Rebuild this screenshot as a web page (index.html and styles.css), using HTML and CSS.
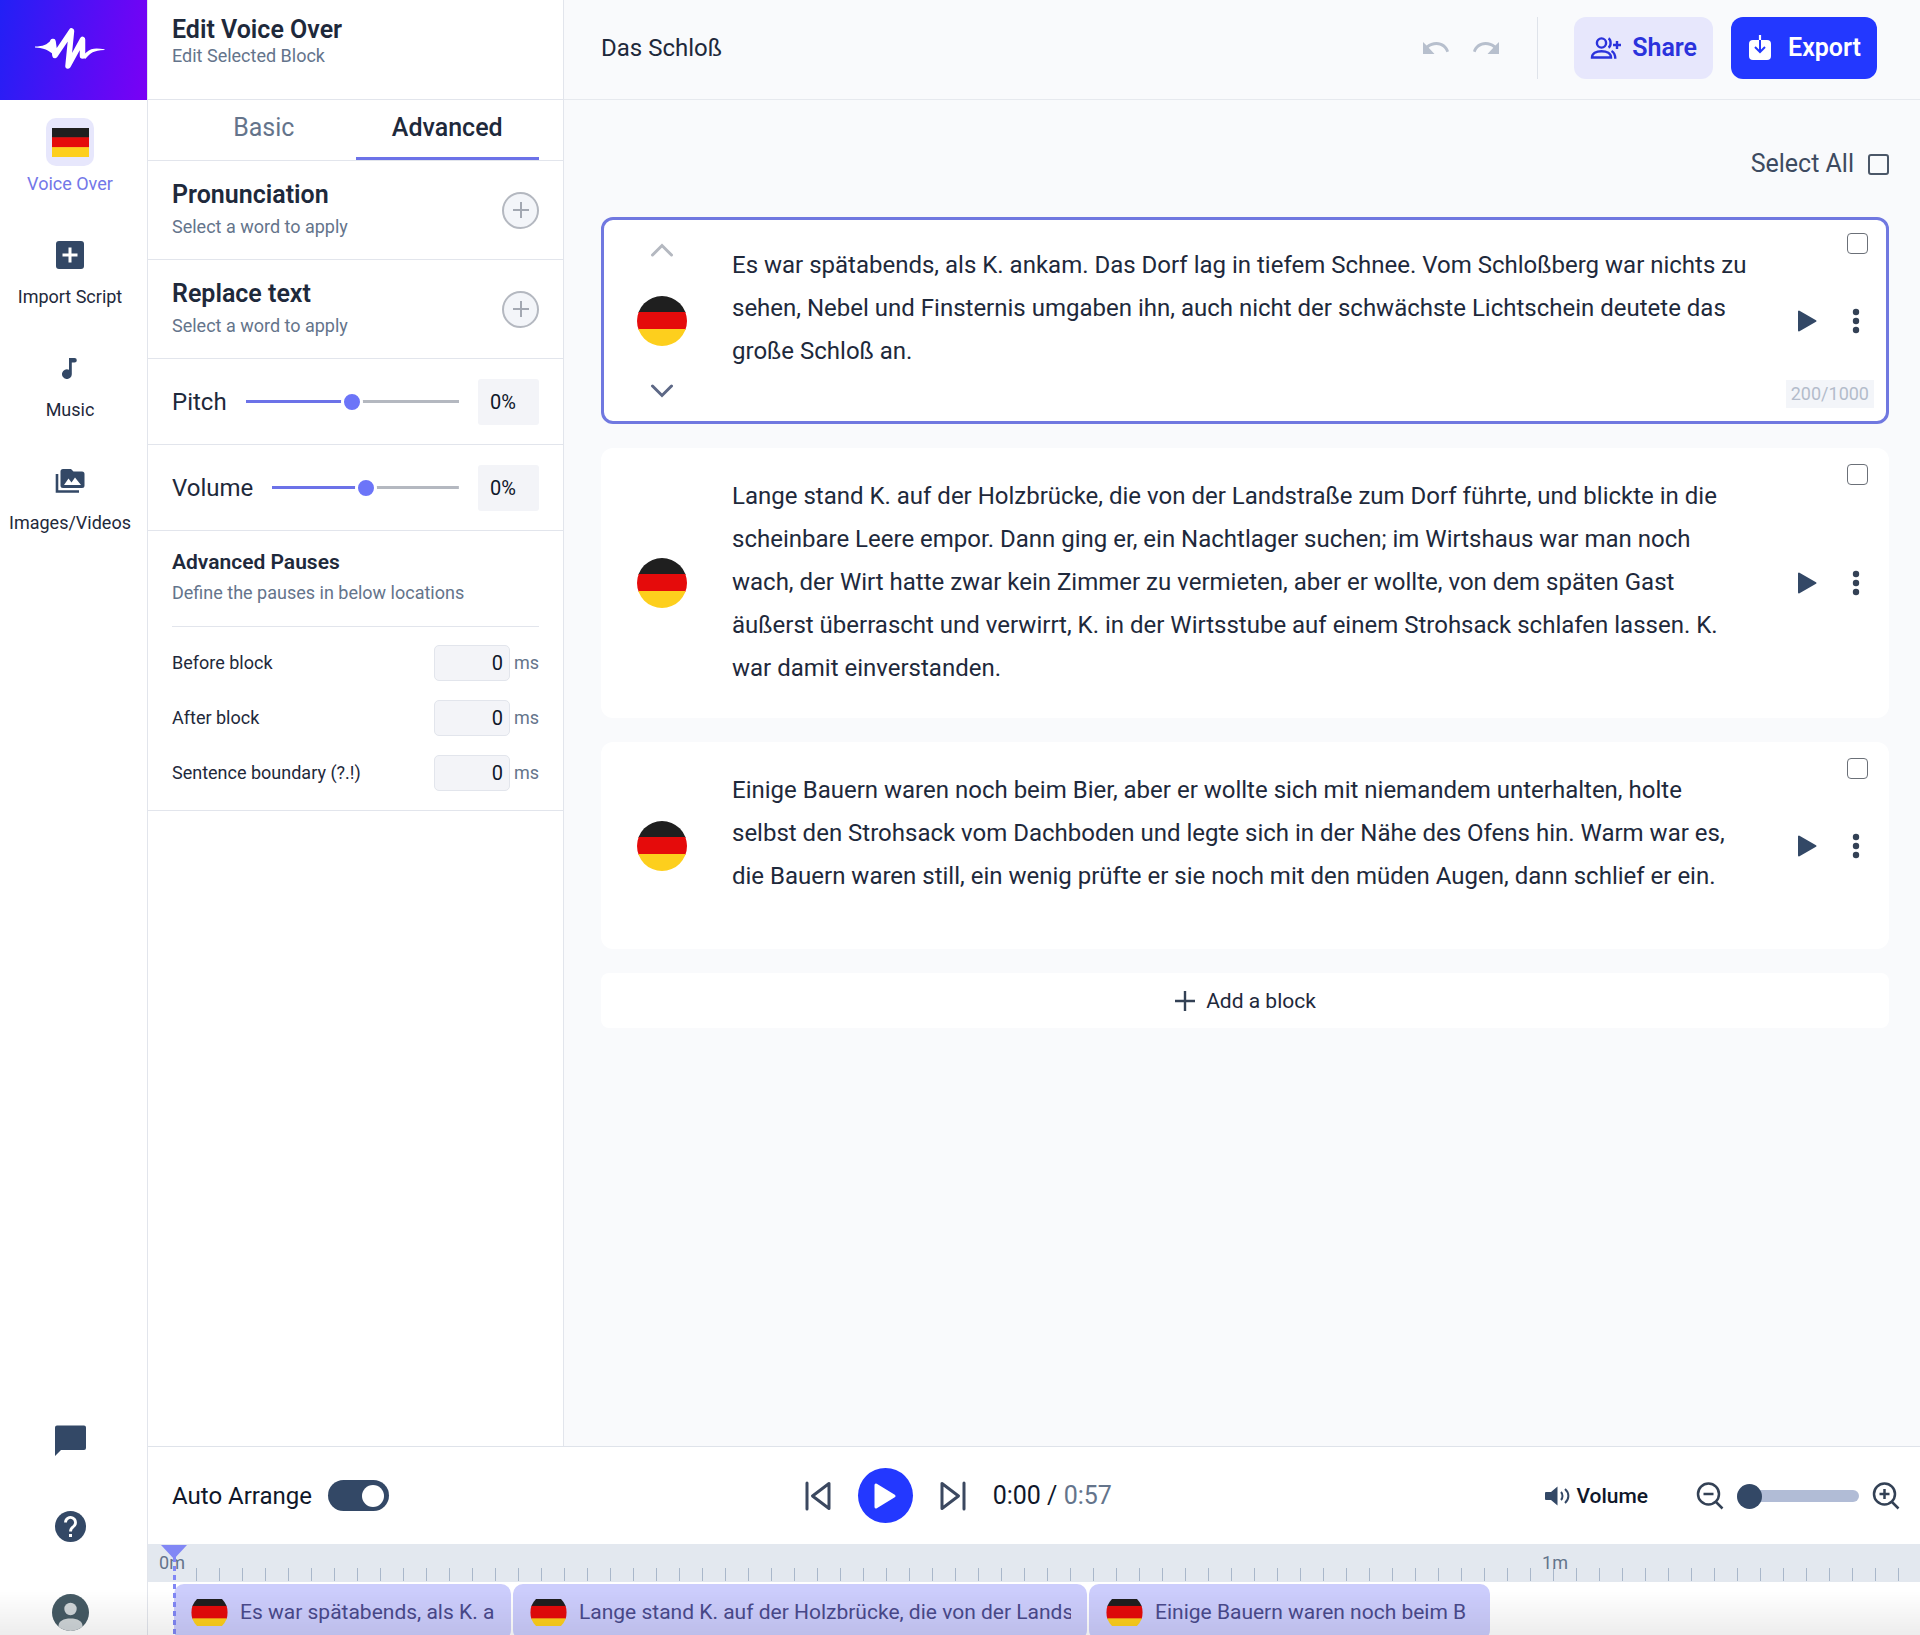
FILE: index.html
```html
<!DOCTYPE html>
<html lang="en">
<head>
    <meta charset="UTF-8">
    <meta name="viewport" content="width=device-width, initial-scale=1">
    <title>Das Schloß</title>
    <link rel="stylesheet" href="styles.css">
</head>
<body>

    <svg class="defs" aria-hidden="true">
        <defs>
            <clipPath id="flag-round"><circle cx="25" cy="25" r="25"/></clipPath>
            <symbol id="flag" viewBox="0 0 50 50" preserveAspectRatio="none">
                <rect width="50" height="17" fill="#1f1f1f"/>
                <rect y="16" width="50" height="18" fill="#e50b0b"/>
                <rect y="33" width="50" height="17" fill="#fdcf1d"/>
            </symbol>
            <symbol id="play" viewBox="0 0 20 22">
                <path d="M2 1.5v19L18.500 11z" fill="#334866" stroke="#334866" stroke-width="2" stroke-linejoin="round"/>
            </symbol>
            <symbol id="dots" viewBox="0 0 8 26">
                <circle cx="4" cy="4" r="3.200"/><circle cx="4" cy="13" r="3.200"/><circle cx="4" cy="22" r="3.200"/>
            </symbol>
        </defs>
    </svg>

    <div class="app">

        <aside class="sidebar">
            <a class="logo" href="#" aria-label="Home">
                <svg viewBox="0 0 147 100">
                    <path d="M35 46.600C43 46.200 47 45 51 40l6 16c-5-1-7-8-22-8.600zM104.500 49.200c-8-1-13-1.500-18 3l-6 5 5 1.500c5-6 8-8 19-8.700z" fill="#fff"/>
                    <path d="M53 41.500L55 55.500 71.500 31 68 66 82.500 39.500 82.500 56" fill="none" stroke="#fff" stroke-width="5.500" stroke-linecap="round" stroke-linejoin="round"/>
                </svg>
            </a>
            <nav class="side-nav">
                <a class="side-item active" href="#">
                    <span class="side-icon"><svg width="37" height="29"><use href="#flag" width="37" height="29"/></svg></span>
                    Voice Over
                </a>
                <a class="side-item" href="#">
                    <span class="side-icon">
                        <svg width="28" height="28" viewBox="0 0 28 28"><rect width="28" height="28" rx="3" fill="#334866"/><path d="M14 6.500v15M6.500 14h15" stroke="#fff" stroke-width="3"/></svg>
                    </span>
                    Import Script
                </a>
                <a class="side-item" href="#">
                    <span class="side-icon">
                        <svg width="16" height="22" viewBox="0 0 16 22"><path d="M7 1h5.500a2.200 2.200 0 0 1 0 4.600H9.800V17a4.900 4.900 0 1 1-2.800-4.300z" fill="#334866"/></svg>
                    </span>
                    Music
                </a>
                <a class="side-item" href="#">
                    <span class="side-icon">
                        <svg width="30" height="26" viewBox="0 0 30 26"><path d="M2 6v17.500h22" fill="none" stroke="#334866" stroke-width="2.600"/><path d="M8 1h8l2.500 2.500H27a2.500 2.500 0 0 1 2.500 2.500v11.500A2.500 2.500 0 0 1 27 20H8a2.500 2.500 0 0 1-2.500-2.500v-14A2.500 2.500 0 0 1 8 1z" fill="#334866"/><path d="M9 17l4.500-6.500 3 4 3.500-5L26 17z" fill="#fff"/></svg>
                    </span>
                    Images/Videos
                </a>
            </nav>
            <div class="side-bottom">
                <button type="button" aria-label="Chat">
                    <svg width="31" height="31" viewBox="0 0 31 31"><path d="M2 .5h27a2 2 0 0 1 2 2v20.500a2 2 0 0 1-2 2H6l-6 6v-28.500a2 2 0 0 1 2-2z" fill="#334866"/></svg>
                </button>
                <button type="button" aria-label="Help">
                    <svg width="31" height="31" viewBox="0 0 31 31"><circle cx="15.500" cy="15.500" r="15.500" fill="#334866"/><path d="M10.500 11.500a5 5 0 1 1 8 4c-2 1.500-3 2.200-3 5" fill="none" stroke="#fff" stroke-width="2.800"/><rect x="14" y="23" width="3" height="3" fill="#fff"/></svg>
                </button>
                <button type="button" aria-label="Account">
                    <svg width="37" height="37" viewBox="0 0 37 37"><clipPath id="av"><circle cx="18.500" cy="18.500" r="18.500"/></clipPath><g clip-path="url(#av)"><rect width="37" height="37" fill="#455a64"/><circle cx="18.500" cy="15" r="6.200" fill="#cfd5d8"/><path d="M6.500 37v-5c0-5 5-7.500 12-7.500s12 2.500 12 7.500v5z" fill="#cfd5d8"/></g></svg>
                </button>
            </div>
        </aside>

        <div class="workspace">
            <div class="upper">

                <section class="panel">
                    <header class="panel-head">
                        <h1>Edit Voice Over</h1>
                        <p>Edit Selected Block</p>
                    </header>
                    <div class="tabs" role="tablist">
                        <button type="button" role="tab">Basic</button>
                        <button type="button" role="tab" class="active" aria-selected="true">Advanced</button>
                    </div>

                    <div class="option">
                        <div>
                            <h2>Pronunciation</h2>
                            <p>Select a word to apply</p>
                        </div>
                        <button type="button" class="round-add" aria-label="Add pronunciation">
                            <svg width="18" height="18" viewBox="0 0 18 18"><path d="M9 1v16M1 9h16"/></svg>
                        </button>
                    </div>
                    <div class="option">
                        <div>
                            <h2>Replace text</h2>
                            <p>Select a word to apply</p>
                        </div>
                        <button type="button" class="round-add" aria-label="Add replacement">
                            <svg width="18" height="18" viewBox="0 0 18 18"><path d="M9 1v16M1 9h16"/></svg>
                        </button>
                    </div>

                    <div class="slider-row">
                        <label for="pitch">Pitch</label>
                        <input type="range" id="pitch" min="-50" max="50" value="0">
                        <input type="text" class="percent" value="0%" aria-label="Pitch value">
                    </div>
                    <div class="slider-row">
                        <label for="volume">Volume</label>
                        <input type="range" id="volume" min="-50" max="50" value="0">
                        <input type="text" class="percent" value="0%" aria-label="Volume value">
                    </div>

                    <div class="pauses">
                        <div class="pauses-head">
                            <h3>Advanced Pauses</h3>
                            <p>Define the pauses in below locations</p>
                        </div>
                        <div class="pause-list">
                            <div class="pause">
                                <label for="before">Before block</label>
                                <input type="text" id="before" value="0"><span>ms</span>
                            </div>
                            <div class="pause">
                                <label for="after">After block</label>
                                <input type="text" id="after" value="0"><span>ms</span>
                            </div>
                            <div class="pause">
                                <label for="sentence">Sentence boundary (?.!)</label>
                                <input type="text" id="sentence" value="0"><span>ms</span>
                            </div>
                        </div>
                    </div>
                </section>

                <main class="editor">
                    <header class="topbar">
                        <div class="doc-name">Das Schloß</div>
                        <div class="history">
                            <button type="button" aria-label="Undo">
                                <svg width="26" height="12" viewBox="0 0 26 12"><path d="M0 0l3.600 3.600C6.300 1.400 9.600 0 13.500 0 19.500 0 24.500 3.800 26 9.300l-2.600 1C22 6 18 3 13.500 3 10.500 3 7.800 4 5.700 5.700L11.500 12H0z"/></svg>
                            </button>
                            <button type="button" aria-label="Redo">
                                <svg width="26" height="12" viewBox="0 0 26 12"><path d="M26 0l-3.600 3.600C19.700 1.400 16.400 0 12.500 0 6.500 0 1.500 3.800 0 9.300l2.600 1C4 6 8 3 12.500 3c3 0 5.700 1 7.800 2.700L14.500 12H26z"/></svg>
                            </button>
                        </div>
                        <div class="top-actions">
                            <button type="button" class="btn share">
                                <svg width="32" height="24" viewBox="0 0 32 24" fill="none" stroke="#2b33dc" stroke-width="2.400"><circle cx="11.500" cy="7" r="4.600"/><path d="M2 21.500c0-4 4-6.300 9.500-6.300s9.500 2.300 9.500 6.300zM18.500 2.400c2.800 1.500 2.800 7.700 0 9.200M21.500 15c2.600 1.500 3.800 4 3.800 7.800M27 5v8M23 9h8"/></svg>
                                Share
                            </button>
                            <button type="button" class="btn export">
                                <svg width="22" height="26" viewBox="0 0 22 26"><rect y="5" width="22" height="20" rx="4" fill="#fff"/><path d="M11 0v6" stroke="#fff" stroke-width="2.200"/><path d="M11 5v11.500M6 12l5 5 5-5" fill="none" stroke="#2338ff" stroke-width="2"/></svg>
                                Export
                            </button>
                        </div>
                    </header>

                    <div class="blocks">
                        <div class="select-all">
                            <label for="all">Select All</label>
                            <input type="checkbox" id="all">
                        </div>

                        <article class="block selected">
                            <div class="voice">
                                <button type="button" class="move up" aria-label="Move up"><svg width="24" height="14" viewBox="0 0 24 14"><path d="M2.500 12L12 2.500 21.500 12"/></svg></button>
                                <svg class="flag" viewBox="0 0 50 50"><use href="#flag" width="50" height="50" clip-path="url(#flag-round)"/></svg>
                                <button type="button" class="move down" aria-label="Move down"><svg width="24" height="14" viewBox="0 0 24 14"><path d="M2.500 2L12 11.500 21.500 2"/></svg></button>
                            </div>
                            <p class="script" lang="de">Es war spätabends, als K. ankam. Das Dorf lag in tiefem Schnee. Vom Schloßberg war nichts zu sehen, Nebel und Finsternis umgaben ihn, auch nicht der schwächste Lichtschein deutete das große Schloß an.</p>
                            <div class="tools">
                                <input type="checkbox" aria-label="Select block 1">
                                <div class="tool-buttons">
                                    <button type="button" aria-label="Play"><svg width="20" height="22"><use href="#play"/></svg></button>
                                    <button type="button" aria-label="More"><svg width="8" height="26"><use href="#dots"/></svg></button>
                                </div>
                                <span class="counter">200/1000</span>
                            </div>
                        </article>

                        <article class="block">
                            <div class="voice">
                                <svg class="flag" viewBox="0 0 50 50"><use href="#flag" width="50" height="50" clip-path="url(#flag-round)"/></svg>
                            </div>
                            <p class="script" lang="de">Lange stand K. auf der Holzbrücke, die von der Landstraße zum Dorf führte, und blickte in die scheinbare Leere empor. Dann ging er, ein Nachtlager suchen; im Wirtshaus war man noch wach, der Wirt hatte zwar kein Zimmer zu vermieten, aber er wollte, von dem späten Gast äußerst überrascht und verwirrt, K. in der Wirtsstube auf einem Strohsack schlafen lassen. K. war damit einverstanden.</p>
                            <div class="tools">
                                <input type="checkbox" aria-label="Select block 2">
                                <div class="tool-buttons">
                                    <button type="button" aria-label="Play"><svg width="20" height="22"><use href="#play"/></svg></button>
                                    <button type="button" aria-label="More"><svg width="8" height="26"><use href="#dots"/></svg></button>
                                </div>
                            </div>
                        </article>

                        <article class="block">
                            <div class="voice">
                                <svg class="flag" viewBox="0 0 50 50"><use href="#flag" width="50" height="50" clip-path="url(#flag-round)"/></svg>
                            </div>
                            <p class="script" lang="de">Einige Bauern waren noch beim Bier, aber er wollte sich mit niemandem unterhalten, holte selbst den Strohsack vom Dachboden und legte sich in der Nähe des Ofens hin. Warm war es, die Bauern waren still, ein wenig prüfte er sie noch mit den müden Augen, dann schlief er ein.</p>
                            <div class="tools">
                                <input type="checkbox" aria-label="Select block 3">
                                <div class="tool-buttons">
                                    <button type="button" aria-label="Play"><svg width="20" height="22"><use href="#play"/></svg></button>
                                    <button type="button" aria-label="More"><svg width="8" height="26"><use href="#dots"/></svg></button>
                                </div>
                            </div>
                        </article>

                        <button type="button" class="add-block">
                            <svg width="22" height="22" viewBox="0 0 22 22"><path d="M11 1v20M1 11h20" stroke="#334155" stroke-width="2.400"/></svg>
                            Add a block
                        </button>
                    </div>
                </main>
            </div>

            <footer class="player">
                <div class="controls">
                    <div class="arrange">
                        <label for="arrange">Auto Arrange</label>
                        <input type="checkbox" id="arrange" class="switch" checked>
                    </div>
                    <div class="transport">
                        <button type="button" aria-label="Previous">
                            <svg width="26" height="30" viewBox="0 0 26 30"><path d="M2 2v26M24 2.500v25L7.500 15z"/></svg>
                        </button>
                        <button type="button" class="play-main" aria-label="Play all">
                            <svg width="24" height="28" viewBox="0 0 24 28"><path d="M3 3v22l18-11z"/></svg>
                        </button>
                        <button type="button" aria-label="Next">
                            <svg width="26" height="30" viewBox="0 0 26 30"><path d="M24 2v26M2 2.500v25L18.500 15z"/></svg>
                        </button>
                        <div class="time">0:00 / <span>0:57</span></div>
                    </div>
                    <div class="right-controls">
                        <button type="button" class="volume-btn">
                            <svg width="25" height="20" viewBox="0 0 25 20"><path d="M1 6h5l6.500-5.500v19L6 14H1a1 1 0 0 1-1-1V7a1 1 0 0 1 1-1z" fill="#334866"/><path d="M16 6c2 2 2 6 0 8M20 3c4.500 4 4.500 10 0 14" fill="none" stroke="#334866" stroke-width="2"/></svg>
                            Volume
                        </button>
                        <div class="zoom">
                            <button type="button" aria-label="Zoom out">
                                <svg width="28" height="28" viewBox="0 0 28 28"><circle cx="12.500" cy="12" r="10.500"/><path d="M20 20l6.500 6.500M7.500 12h10"/></svg>
                            </button>
                            <input type="range" min="0" max="100" value="0" aria-label="Timeline zoom">
                            <button type="button" aria-label="Zoom in">
                                <svg width="28" height="28" viewBox="0 0 28 28"><circle cx="12.500" cy="12" r="10.500"/><path d="M20 20l6.500 6.500M7.500 12h10M12.500 7v10"/></svg>
                            </button>
                        </div>
                    </div>
                </div>

                <div class="timeline">
                    <div class="ruler">
                        <span class="mark" style="left: 24px">0m</span>
                        <span class="mark" style="left: 1407px">1m</span>
                        <div class="ticks"></div>
                    </div>
                    <div class="track">
                        <div class="clip" style="width: 337px">
                            <svg width="37" height="27" viewBox="0 6.500 50 37"><use href="#flag" width="50" height="50" clip-path="url(#flag-round)"/></svg>
                            <span>Es war spätabends, als K. an</span>
                        </div>
                        <div class="clip" style="width: 574px">
                            <svg width="37" height="27" viewBox="0 6.500 50 37"><use href="#flag" width="50" height="50" clip-path="url(#flag-round)"/></svg>
                            <span>Lange stand K. auf der Holzbrücke, die von der Lands</span>
                        </div>
                        <div class="clip" style="width: 401px">
                            <svg width="37" height="27" viewBox="0 6.500 50 37"><use href="#flag" width="50" height="50" clip-path="url(#flag-round)"/></svg>
                            <span>Einige Bauern waren noch beim B</span>
                        </div>
                    </div>
                    <div class="playhead"></div>
                </div>
            </footer>
        </div>
    </div>

</body>
</html>
```
FILE: styles.css
```css
* {
    box-sizing: border-box;
}
body {
    margin: 0;
    font-family: Roboto, "Liberation Sans", sans-serif;
    font-size: 24px;
    line-height: 28px;
    color: #1e293b;
    background-color: #fff;
}
h1, h2, h3, p {
    margin: 0;
}
button {
    padding: 0;
    border: none;
    background: none;
    font: inherit;
    color: inherit;
    cursor: pointer;
}
svg {
    display: block;
    flex-shrink: 0;
}
.defs {
    position: absolute;
    width: 0;
    height: 0;
}
.app {
    display: flex;
    height: 100vh;
    overflow: hidden;
}
/* soft shade along the bottom edge of the window */
.app::after {
    content: "";
    position: fixed;
    left: 0;
    right: 0;
    bottom: 0;
    height: 44px;
    background: linear-gradient(rgba(0, 0, 0, 0), rgba(0, 0, 0, 0.07));
    pointer-events: none;
}

/* sidebar */
.sidebar {
    display: flex;
    flex-direction: column;
    width: 148px;
    flex-shrink: 0;
    border-right: 1px solid #e2e5ec;
}
.logo {
    height: 100px;
    background: linear-gradient(100deg, #2220f5, #7a00f5);
}
.side-nav {
    display: flex;
    flex-direction: column;
    gap: 35px;
    padding: 18px 7px 0 0;
}
.side-item {
    display: flex;
    flex-direction: column;
    align-items: center;
    gap: 6px;
    font-size: 18px;
    line-height: 24px;
    color: #1e293b;
    text-decoration: none;
}
.side-icon {
    display: flex;
    align-items: center;
    justify-content: center;
    width: 48px;
    height: 48px;
    border-radius: 10px;
}
.side-item.active {
    color: #7377e8;
}
.side-item.active .side-icon {
    background-color: #e7e7fc;
}
.side-bottom {
    display: flex;
    flex-direction: column;
    align-items: center;
    gap: 49px;
    margin-top: auto;
    padding: 0 7px 4px 0;
}
.side-bottom button {
    display: flex;
    align-items: center;
    justify-content: center;
    width: 37px;
    height: 37px;
}

.workspace {
    display: flex;
    flex-direction: column;
    flex: 1;
    min-width: 0;
}
.upper {
    display: flex;
    flex: 1;
    min-height: 0;
}

/* left settings panel */
.panel {
    width: 416px;
    flex-shrink: 0;
    border-right: 1px solid #e2e5ec;
}
.panel p {
    font-size: 18px;
    line-height: 24px;
    color: #64748b;
}
.panel-head {
    height: 100px;
    padding: 16px 24px;
    border-bottom: 1px solid #e2e5ec;
}
h1, h2 {
    font-size: 25px;
    font-weight: 600;
}
.tabs {
    display: flex;
    height: 61px;
    padding: 0 24px;
    border-bottom: 1px solid #e2e5ec;
}
.tabs button {
    flex: 1;
    padding-bottom: 2px;
    border-bottom: 3px solid transparent;
    font-size: 25px;
    color: #64748b;
}
.tabs .active {
    border-color: #6c72e8;
    color: #1e293b;
    font-weight: 500;
}
.option {
    display: flex;
    align-items: center;
    justify-content: space-between;
    padding: 20px 24px;
    border-bottom: 1px solid #e2e5ec;
}
.option p {
    margin-top: 6px;
}
.round-add {
    display: flex;
    align-items: center;
    justify-content: center;
    width: 37px;
    height: 37px;
    border: 2px solid #b4b8c0;
    border-radius: 50%;
    background-color: #f3f5f9;
}
.round-add path {
    stroke: #a3a8b2;
    stroke-width: 2;
}
.slider-row {
    display: flex;
    align-items: center;
    gap: 19px;
    height: 86px;
    padding: 0 24px;
    border-bottom: 1px solid #e2e5ec;
}
.slider-row input[type="range"] {
    flex: 1;
    min-width: 0;
    height: 22px;
    margin: 0;
    appearance: none;
    background: linear-gradient(90deg, #6c72e8 50%, #b4b8c0 50%) center / 100% 3px no-repeat;
}
.slider-row input[type="range"]::-webkit-slider-thumb {
    appearance: none;
    width: 22px;
    height: 22px;
    border: 3px solid #fff;
    border-radius: 50%;
    background-color: #6c75f8;
}
.percent {
    width: 61px;
    height: 46px;
    padding: 0 12px;
    border: none;
    border-radius: 3px;
    background-color: #f3f4f8;
    font: 20px Roboto, "Liberation Sans", sans-serif;
    color: #0f172a;
}
.pauses {
    padding: 17px 24px 19px;
    border-bottom: 1px solid #e2e5ec;
}
.pauses-head {
    padding-bottom: 21px;
    border-bottom: 1px solid #e2e5ec;
}
.pauses-head h3 {
    margin-bottom: 5px;
    font-size: 21px;
    font-weight: 600;
}
.pause-list {
    display: flex;
    flex-direction: column;
    gap: 19px;
    padding-top: 18px;
}
.pause {
    display: flex;
    align-items: center;
    font-size: 18px;
}
.pause label {
    flex: 1;
}
.pause input {
    width: 76px;
    height: 36px;
    padding: 0 6px;
    border: 1px solid #e2e5ec;
    border-radius: 5px;
    background-color: #f3f4f8;
    font: 20px Roboto, "Liberation Sans", sans-serif;
    text-align: right;
    color: #0f172a;
}
.pause span {
    margin-left: 4px;
    color: #64748b;
}

/* editor */
.editor {
    flex: 1;
    min-width: 0;
    background-color: #f9fafc;
}
.topbar {
    display: flex;
    align-items: center;
    height: 100px;
    padding: 0 43px 4px 37px;
    border-bottom: 1px solid #e6e9ee;
}
.doc-name {
    flex: 1;
}
.history {
    display: flex;
    gap: 24px;
    padding-right: 38px;
}
.history path {
    fill: #b7bfcd;
}
.top-actions {
    display: flex;
    align-items: center;
    gap: 18px;
    padding-left: 36px;
    border-left: 1px solid #dfe3ea;
}
.btn {
    display: flex;
    align-items: center;
    height: 62px;
    border-radius: 12px;
    font-size: 25px;
    font-weight: 600;
}
.share {
    gap: 10px;
    padding: 0 16px;
    background-color: #e7e7fc;
    color: #2b33dc;
}
.export {
    gap: 17px;
    padding: 0 16px 0 18px;
    background-color: #2338ff;
    color: #fff;
}
.blocks {
    display: flex;
    flex-direction: column;
    gap: 24px;
    padding: 46px 31px 0 37px;
}
.select-all {
    display: flex;
    align-items: center;
    justify-content: flex-end;
    gap: 14px;
    height: 36px;
    margin-bottom: 11px;
    font-size: 25px;
    color: #3d4a60;
}
.select-all input,
.tools input {
    appearance: none;
    width: 21px;
    height: 21px;
    margin: 0;
    border: 2px solid #4b5768;
    border-radius: 3px;
}
.block {
    display: grid;
    grid-template-columns: 116px 1fr 124px;
    column-gap: 12px;
    min-height: 207px;
    border: 3px solid transparent;
    border-radius: 12px;
    background-color: #fff;
}
.block.selected {
    border-color: #7078e0;
}
.voice {
    display: flex;
    flex-direction: column;
    align-items: center;
    justify-content: center;
    padding: 23px 0;
}
.selected .voice {
    justify-content: space-between;
}
.flag {
    width: 50px;
    height: 50px;
}
.move path {
    fill: none;
    stroke: #5d6886;
    stroke-width: 3;
    stroke-linecap: round;
}
.move.up path {
    stroke: #b4b8c0;
}
.script {
    padding: 24px 0 25px;
    line-height: 43px;
}
.tools {
    display: grid;
    grid-template-rows: 1fr auto 1fr;
    justify-items: end;
    padding: 13px 12px 13px 0;
}
.tools input {
    margin-right: 6px;
    border: 1px solid #6b7078;
    border-radius: 4px;
}
.tool-buttons {
    display: flex;
    gap: 13px;
}
.tool-buttons button {
    display: flex;
    align-items: center;
    justify-content: center;
    width: 36px;
    height: 36px;
}
.tool-buttons svg {
    fill: #334155;
}
.counter {
    align-self: end;
    padding: 0 5px;
    background-color: #f3f5f9;
    font-size: 18px;
    color: #b3bccb;
}
.add-block {
    display: flex;
    align-items: center;
    justify-content: center;
    gap: 10px;
    height: 55px;
    border-radius: 8px;
    background-color: #fff;
    font-size: 21px;
}

/* player and timeline */
.player {
    border-top: 1px solid #dfe3ea;
}
.controls {
    display: flex;
    align-items: center;
    justify-content: space-between;
    height: 97px;
    padding: 0 20px 0 24px;
    color: #0f172a;
}
.arrange {
    display: flex;
    align-items: center;
    gap: 16px;
}
.switch {
    display: flex;
    align-items: center;
    justify-content: flex-end;
    appearance: none;
    width: 61px;
    height: 31px;
    margin: 0;
    padding: 0 5px;
    border-radius: 16px;
    background-color: #334866;
}
.switch::before {
    content: "";
    width: 22px;
    height: 22px;
    border-radius: 50%;
    background-color: #fff;
}
.transport {
    display: flex;
    align-items: center;
    gap: 27px;
}
.transport path {
    fill: none;
    stroke: #3b4860;
    stroke-width: 3;
    stroke-linecap: round;
    stroke-linejoin: round;
}
.play-main {
    display: flex;
    align-items: center;
    justify-content: center;
    width: 55px;
    height: 55px;
    border-radius: 50%;
    background-color: #2338ff;
}
.transport .play-main path {
    fill: #fff;
    stroke: #fff;
}
.time {
    min-width: 137px;
    font-size: 25px;
}
.time span {
    color: #64748b;
}
.right-controls {
    display: flex;
    align-items: center;
    gap: 48px;
}
.volume-btn {
    display: flex;
    align-items: center;
    gap: 6px;
    font-size: 21px;
    font-weight: 500;
}
.zoom {
    display: flex;
    align-items: center;
    gap: 13px;
}
.zoom svg {
    fill: none;
    stroke: #334155;
    stroke-width: 2.5;
}
.zoom input {
    width: 122px;
    height: 25px;
    margin: 0;
    appearance: none;
    background: none;
}
.zoom input::-webkit-slider-runnable-track {
    height: 12px;
    border-radius: 6px;
    background-color: #b1bcd6;
}
.zoom input::-webkit-slider-thumb {
    appearance: none;
    width: 25px;
    height: 25px;
    margin-top: -6px;
    border-radius: 50%;
    background-color: #334866;
}
.timeline {
    position: relative;
    height: 91px;
    overflow: hidden;
}
.ruler {
    position: relative;
    height: 38px;
    background-color: #e3e8ef;
}
.mark {
    position: absolute;
    top: 8px;
    font-size: 18px;
    line-height: 22px;
    color: #64748b;
    transform: translateX(-50%);
}
.ticks {
    height: 38px;
    margin-left: 48px;
    background: repeating-linear-gradient(90deg, #a9b7ca 0, #a9b7ca 1px, transparent 1px, transparent 23px) left 24px / 100% 13px no-repeat;
}
.track {
    display: flex;
    gap: 2px;
    padding: 2px 0 0 26px;
}
.clip {
    display: flex;
    align-items: center;
    gap: 12px;
    height: 56px;
    padding: 0 16px 0 17px;
    border-radius: 10px;
    background-color: #cccdfc;
    font-size: 21px;
    color: #4a4a8c;
}
.clip span {
    flex: 1;
    overflow: hidden;
    white-space: nowrap;
}
.playhead {
    position: absolute;
    top: 1px;
    left: 13px;
    width: 26px;
    height: 90px;
    background: repeating-linear-gradient(#8187f5 0, #8187f5 5px, transparent 5px, transparent 9px) center 12px / 3px 100% no-repeat;
}
.playhead::before {
    content: "";
    display: block;
    height: 14px;
    background-color: #8187f5;
    clip-path: polygon(0 0, 100% 0, 50% 100%);
}
```
